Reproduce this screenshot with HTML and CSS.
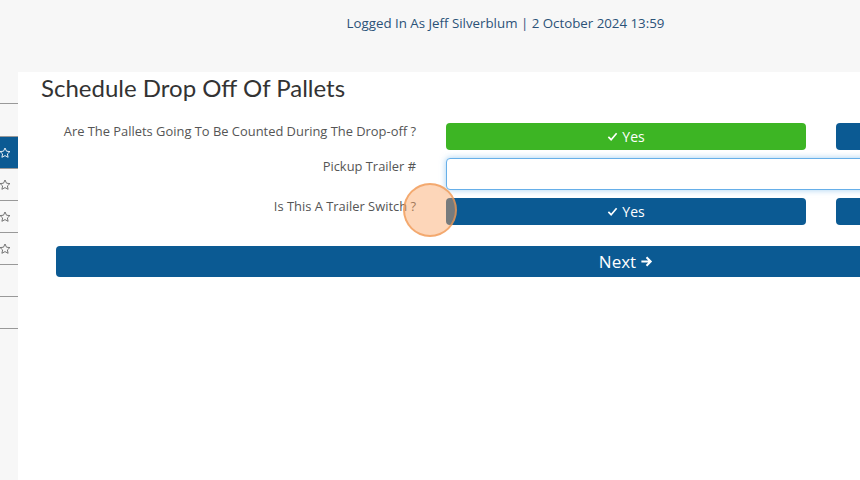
FILE: index.html
```html
<!DOCTYPE html>
<html lang="en">

<head>
    <meta charset="UTF-8">
    <meta name="viewport" content="width=device-width, initial-scale=1.0">
    <title>Schedule Drop Off Of Pallets</title>
    <link rel="stylesheet" href="styles.css">
</head>

<body>
    <div class="topbar">
        <span class="user-info">Logged In As Jeff Silverblum | 2 October 2024 13:59</span>
    </div>

    <div class="layout">
        <ul class="sidebar">
            <li class="side-item first"></li>
            <li class="side-item tall"></li>
            <li class="side-item active">
                <svg class="star" viewBox="0 0 12 12"><path d="M6 1l1.5 3.2 3.4.4-2.5 2.3.7 3.4L6 8.6 2.9 10.3l.7-3.4L1.1 4.6l3.4-.4z" /></svg>
            </li>
            <li class="side-item">
                <svg class="star" viewBox="0 0 12 12"><path d="M6 1l1.5 3.2 3.4.4-2.5 2.3.7 3.4L6 8.6 2.9 10.3l.7-3.4L1.1 4.6l3.4-.4z" /></svg>
            </li>
            <li class="side-item">
                <svg class="star" viewBox="0 0 12 12"><path d="M6 1l1.5 3.2 3.4.4-2.5 2.3.7 3.4L6 8.6 2.9 10.3l.7-3.4L1.1 4.6l3.4-.4z" /></svg>
            </li>
            <li class="side-item">
                <svg class="star" viewBox="0 0 12 12"><path d="M6 1l1.5 3.2 3.4.4-2.5 2.3.7 3.4L6 8.6 2.9 10.3l.7-3.4L1.1 4.6l3.4-.4z" /></svg>
            </li>
            <li class="side-item"></li>
            <li class="side-item"></li>
        </ul>

        <div class="main">
            <h1 class="title">Schedule Drop Off Of Pallets</h1>

            <form class="form">
                <label class="form-label">Are The Pallets Going To Be Counted During The Drop-off ?</label>
                <button type="button" class="btn btn-green">
                    <svg class="check" viewBox="0 0 12 12"><path d="M1.5 6.5l3 3 6-7" /></svg>Yes
                </button>
                <button type="button" class="btn btn-blue">
                    <svg class="check" viewBox="0 0 12 12"><path d="M2 2l8 8M10 2l-8 8" /></svg>No
                </button>

                <label class="form-label" for="trailer">Pickup Trailer #</label>
                <input type="text" id="trailer" class="form-input">

                <label class="form-label">Is This A Trailer Switch ?</label>
                <button type="button" class="btn btn-blue">
                    <svg class="check" viewBox="0 0 12 12"><path d="M1.5 6.5l3 3 6-7" /></svg>Yes
                </button>
                <button type="button" class="btn btn-blue">
                    <svg class="check" viewBox="0 0 12 12"><path d="M2 2l8 8M10 2l-8 8" /></svg>No
                </button>

                <button type="button" class="btn btn-blue btn-next">Next
                    <svg class="arrow" viewBox="0 0 14 14"><path d="M1.5 7h10M7 2.5L11.5 7 7 11.5" /></svg>
                </button>

                <span class="click-marker"></span>
            </form>
        </div>
    </div>
</body>

</html>
```

FILE: styles.css
```css
body {
    margin: 0;
    width: 860px;
    height: 480px;
    overflow: hidden;
    background-color: #f7f7f7;
    font-family: "Open Sans", Lato, sans-serif;
}

.topbar {
    width: 1011px;
    height: 72px;
    padding-top: 11px;
    box-sizing: border-box;
    text-align: center;
}

.user-info {
    font-size: 13.3px;
    color: #2b5278;
}

.layout {
    display: flex;
    width: 1300px;
}

.sidebar {
    width: 18px;
    margin: 0;
    padding: 0;
    list-style: none;
}

.side-item {
    height: 31px;
    border-bottom: 1px solid #999;
    display: flex;
    align-items: center;
}

.side-item.tall {
    height: 32px;
}

.side-item.active {
    background-color: #0b5a93;
}

.star {
    width: 12px;
    height: 12px;
    margin-left: -1px;
    fill: none;
    stroke: #666;
    stroke-width: 0.9;
    stroke-linejoin: round;
}

.active .star {
    stroke: #fff;
}

.main {
    flex: 1;
    background-color: #fff;
    height: 420px;
    padding-left: 23px;
}

.title {
    margin: 0;
    padding-top: 1px;
    font-family: Lato, sans-serif;
    font-size: 24px;
    font-weight: normal;
    line-height: 30px;
    color: #333;
}

.form {
    position: relative;
    margin: 20px 0 0 15px;
    display: grid;
    grid-template-columns: 360px 360px 360px;
    column-gap: 30px;
    row-gap: 8px;
}

.form-label {
    font-size: 12.9px;
    line-height: 17px;
    color: #555;
    text-align: right;
}

.btn {
    height: 27px;
    border: none;
    border-radius: 4px;
    color: #fff;
    font-family: inherit;
    font-size: 14px;
    display: flex;
    align-items: center;
    justify-content: center;
    cursor: pointer;
}

.btn-green {
    background-color: #3db524;
}

.btn-blue {
    background-color: #0b5a93;
}

.check {
    width: 11px;
    height: 11px;
    margin-right: 4px;
    fill: none;
    stroke: #fff;
    stroke-width: 1.8;
}

.form-input {
    grid-column: span 2;
    height: 32px;
    box-sizing: border-box;
    border: 1px solid #66afe9;
    border-radius: 4px;
    box-shadow: 0 0 6px rgba(102, 175, 233, 0.6);
    outline: none;
}

.btn-next {
    grid-column: 1 / span 3;
    height: 31px;
    margin-top: 13px;
    width: 1140px;
    font-size: 17px;
}

.arrow {
    width: 13px;
    height: 13px;
    margin-left: 4px;
    fill: none;
    stroke: #fff;
    stroke-width: 2.2;
}

.click-marker {
    position: absolute;
    left: 347px;
    top: 60px;
    width: 50px;
    height: 50px;
    border-radius: 50%;
    background-color: rgba(250, 165, 100, 0.45);
    border: 2px solid rgba(240, 150, 80, 0.7);
}
```
